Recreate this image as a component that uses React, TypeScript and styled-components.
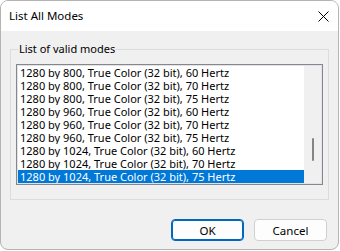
import React from 'react';
import styled, { createGlobalStyle } from 'styled-components';

const GlobalStyle = createGlobalStyle`
  html, body {
    margin: 0;
    padding: 0;
    background: #ffffff;
  }
  body {
    font-family: "Noto Sans", "DejaVu Sans", sans-serif;
    font-size: 11px;
    color: #000000;
  }
`;

const Window = styled.div`
  box-sizing: border-box;
  width: 339px;
  height: 250px;
  border: 1px solid #b4b4b4;
  border-radius: 8px;
  overflow: hidden;
  background: #f0f0f0;
  display: flex;
  flex-direction: column;
`;

const TitleBar = styled.div`
  height: 30px;
  background: #ffffff;
  display: flex;
  align-items: center;
  justify-content: space-between;
  padding: 0 9px 0 8px;
`;

const Title = styled.span`
  font-size: 11.5px;
  line-height: 16px;
`;

const CloseButton = styled.div`
  width: 12px;
  height: 12px;
  display: flex;
  align-items: center;
  justify-content: center;
`;

const Body = styled.div`
  flex: 1;
  display: flex;
  flex-direction: column;
  padding: 18px 9px 0 9px;
`;

const Group = styled.div`
  position: relative;
  border: 1px solid #dcdcdc;
  padding: 14px 5px 14px 5px;
`;

const Legend = styled.span`
  position: absolute;
  left: 7px;
  top: -9px;
  padding: 0 1px;
  line-height: 16px;
  background: #f0f0f0;
`;

const ListBox = styled.div`
  display: flex;
  border: 1px solid #828790;
  box-shadow: inset 0 0 0 1px #e3e3e3;
  padding: 1px;
  background: #ffffff;
`;

const Rows = styled.div`
  flex: 1;
  display: flex;
  flex-direction: column;
`;

const Row = styled.div<{ $selected?: boolean }>`
  height: 13px;
  line-height: 13px;
  padding-left: 2px;
  white-space: nowrap;
  overflow: hidden;
  background: ${p => (p.$selected ? '#0078d7' : 'transparent')};
  color: ${p => (p.$selected ? '#ffffff' : '#000000')};
`;

const ScrollTrack = styled.div`
  width: 17px;
  background: #f0f0f0;
  position: relative;
`;

const ScrollThumb = styled.div`
  position: absolute;
  left: 8px;
  top: 72px;
  width: 2px;
  height: 23px;
  border-radius: 1px;
  background: #858585;
`;

const Footer = styled.div`
  display: flex;
  justify-content: flex-end;
  gap: 10px;
  padding: 19px 2px 0 0;
`;

const Button = styled.button<{ $default?: boolean }>`
  box-sizing: border-box;
  width: 73px;
  height: 22px;
  font-family: inherit;
  font-size: 11.5px;
  color: #000000;
  background: #fdfdfd;
  border: 1px solid ${p => (p.$default ? '#0067c0' : '#d0d0d0')};
  box-shadow: ${p => (p.$default ? 'inset 0 0 0 1px #0067c0' : 'none')};
  border-radius: 4px;
  padding: 0;
`;

const modes = [
  '1280 by 800, True Color (32 bit), 60 Hertz',
  '1280 by 800, True Color (32 bit), 70 Hertz',
  '1280 by 800, True Color (32 bit), 75 Hertz',
  '1280 by 960, True Color (32 bit), 60 Hertz',
  '1280 by 960, True Color (32 bit), 70 Hertz',
  '1280 by 960, True Color (32 bit), 75 Hertz',
  '1280 by 1024, True Color (32 bit), 60 Hertz',
  '1280 by 1024, True Color (32 bit), 70 Hertz',
  '1280 by 1024, True Color (32 bit), 75 Hertz',
];

const App = () => {
  return (
    <>
      <GlobalStyle />
      <Window>
        <TitleBar>
          <Title>List All Modes</Title>
          <CloseButton>
            <svg width="11" height="11" viewBox="0 0 11 11">
              <path d="M0.5 0.5 L10.5 10.5 M10.5 0.5 L0.5 10.5" stroke="#000" strokeWidth="1" />
            </svg>
          </CloseButton>
        </TitleBar>
        <Body>
          <Group>
            <Legend>List of valid modes</Legend>
            <ListBox>
              <Rows>
                {modes.map((m, i) => (
                  <Row key={m} $selected={i === modes.length - 1}>{m}</Row>
                ))}
              </Rows>
              <ScrollTrack>
                <ScrollThumb />
              </ScrollTrack>
            </ListBox>
          </Group>
          <Footer>
            <Button $default>OK</Button>
            <Button>Cancel</Button>
          </Footer>
        </Body>
      </Window>
    </>
  );
};

export default App;
